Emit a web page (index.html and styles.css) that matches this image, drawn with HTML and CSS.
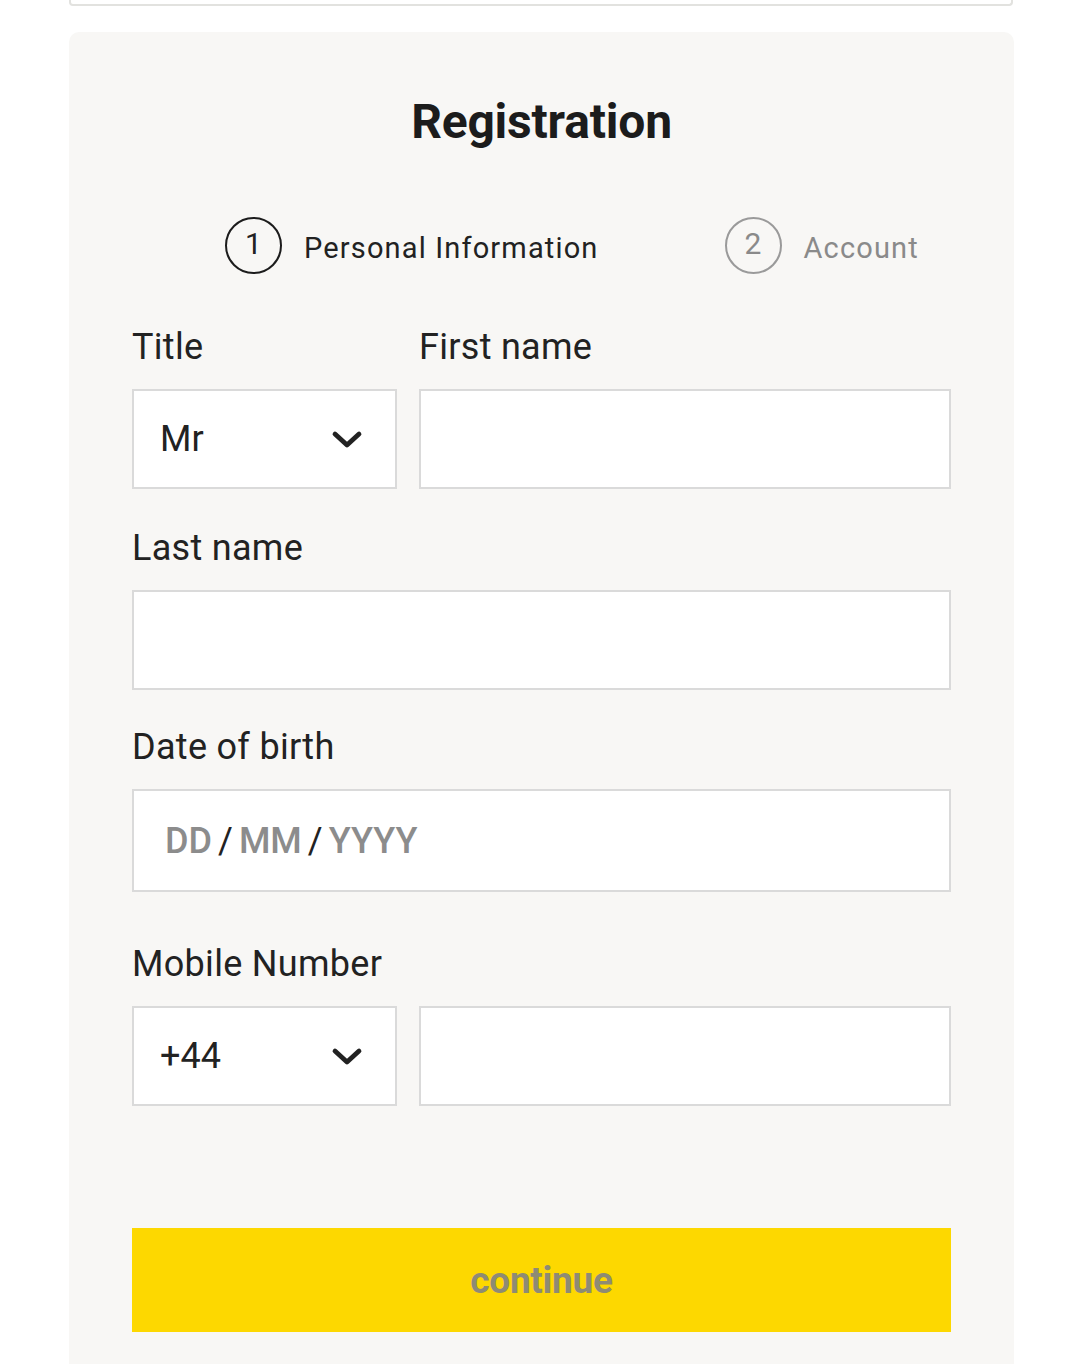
FILE: index.html
```html
<!DOCTYPE html>
<html lang="en">
<head>
<meta charset="utf-8">
<title>Registration</title>
<link rel="stylesheet" href="styles.css">
</head>
<body>
<div class="page">
  <div class="prev-box"></div>
  <section class="card">
    <h1 class="heading">Registration</h1>
    <div class="steps">
      <div class="step step-active">
        <span class="step-num">1</span>
        <span class="step-label">Personal Information</span>
      </div>
      <div class="step step-next">
        <span class="step-num">2</span>
        <span class="step-label">Account</span>
      </div>
    </div>

    <div class="row row-name">
      <div class="field field-small">
        <label class="label">Title</label>
        <div class="box select">
          <span class="value">Mr</span>
          <svg class="chevron" viewBox="0 0 32 20" width="32" height="20"><path d="M4 4 L16 15 L28 4" fill="none" stroke="#222" stroke-width="4.8" stroke-linecap="round" stroke-linejoin="round"/></svg>
        </div>
      </div>
      <div class="field field-grow">
        <label class="label">First name</label>
        <div class="box"></div>
      </div>
    </div>

    <div class="field field-last">
      <label class="label">Last name</label>
      <div class="box"></div>
    </div>

    <div class="field field-dob">
      <label class="label">Date of birth</label>
      <div class="box box-dob">
        <span class="dob-part">DD</span><span class="dob-sep">/</span><span class="dob-part">MM</span><span class="dob-sep">/</span><span class="dob-part">YYYY</span>
      </div>
    </div>

    <div class="row row-mobile">
      <div class="field field-small">
        <label class="label label-mobile">Mobile Number</label>
        <div class="box select">
          <span class="value">+44</span>
          <svg class="chevron" viewBox="0 0 32 20" width="32" height="20"><path d="M4 4 L16 15 L28 4" fill="none" stroke="#222" stroke-width="4.8" stroke-linecap="round" stroke-linejoin="round"/></svg>
        </div>
      </div>
      <div class="field field-grow field-nolabel">
        <div class="box"></div>
      </div>
    </div>

    <button class="continue" type="button">continue</button>
  </section>
</div>
</body>
</html>
```
FILE: styles.css
```css
* { box-sizing: border-box; }
html, body { margin: 0; padding: 0; background: #ffffff; }
body { font-family: Roboto, "Liberation Sans", Arial, sans-serif; color: #222222; }

.page { width: 1080px; }

.prev-box {
  margin: 0 67px 0 69px;
  height: 6px;
  border: 2px solid #e2e2df;
  border-top: none;
  border-radius: 0 0 4px 4px;
  background: #fff;
}

.card {
  margin: 26px 66px 0 69px;
  background: #f8f7f5;
  border-radius: 10px 10px 0 0;
  padding: 62px 63px 40px 63px;
  min-height: 1340px;
}

.heading {
  margin: 0;
  text-align: center;
  font-size: 48px;
  line-height: 56px;
  font-weight: 700;
  color: #1c1c1c;
  letter-spacing: -0.2px;
}

.steps {
  display: flex;
  align-items: center;
  margin: 67px 0 0 93px;
  gap: 126px;
}
.step { display: flex; align-items: center; gap: 22px; }
.step-num {
  width: 57px;
  height: 57px;
  border-radius: 50%;
  border: 2px solid #1c1c1c;
  display: flex;
  align-items: center;
  justify-content: center;
  font-size: 30px;
  line-height: 1;
  padding-bottom: 3px;
}
.step-label {
  font-size: 29px;
  letter-spacing: 1.15px;
  line-height: 36px;
  padding-top: 4px;
}
.step-next .step-num { border-color: #9a9a9a; color: #8a8a8a; }
.step-next .step-label { color: #8a8a8a; }

.row { display: flex; gap: 22px; align-items: flex-end; }
.field { display: flex; flex-direction: column; }
.field-small { width: 265px; flex: none; }
.field-grow { flex: 1; }

.row-name { margin-top: 52px; }
.field-last { margin-top: 38px; }
.field-dob { margin-top: 36px; }
.row-mobile { margin-top: 51px; }

.label {
  font-size: 36px;
  line-height: 42px;
  letter-spacing: 0.3px;
  color: #222222;
  margin-bottom: 21px;
}

.box {
  height: 100px;
  background: #ffffff;
  border: 2px solid #dadada;
}

.box-dob { height: 103px; }

.select {
  display: flex;
  align-items: center;
  justify-content: space-between;
  padding: 0 32px 0 26px;
}
.value { font-size: 36px; color: #222222; line-height: 1; }
.chevron { display: block; margin-top: 2px; }

.box-dob {
  display: flex;
  align-items: center;
  padding-left: 31px;
  font-size: 36px;
}
.dob-part { color: #8c8c8c; font-weight: 500; }
.dob-sep { color: #222; margin: 0 6px; font-weight: 400; }

.continue {
  display: block;
  width: 100%;
  height: 104px;
  margin-top: 122px;
  border: none;
  background: #fdd800;
  color: #8e8b74;
  font-family: Roboto, "Liberation Sans", Arial, sans-serif;
  font-size: 37px;
  font-weight: 700;
  letter-spacing: -0.3px;
  padding: 0;
}
```
